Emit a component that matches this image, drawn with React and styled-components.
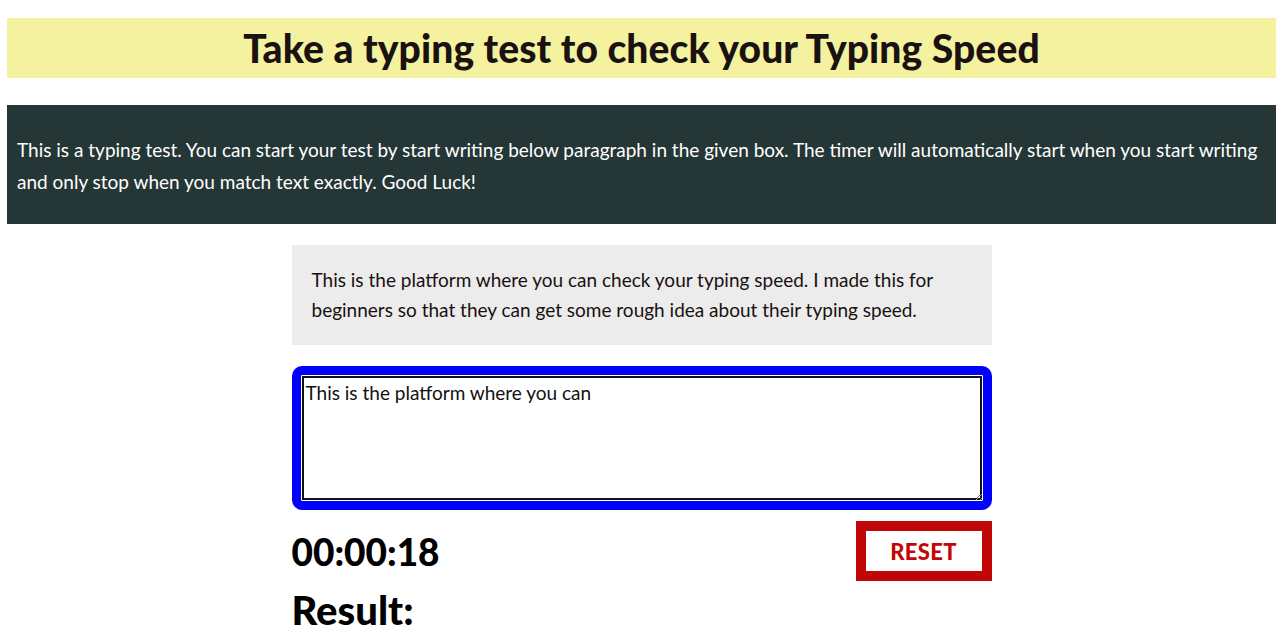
import React, { useState, useRef, useEffect } from "react";
import styled, { createGlobalStyle } from "styled-components";

const Global = createGlobalStyle`
  html, body { margin: 0; padding: 0; background: #fff; }
  body { font-family: Lato, "Open Sans", sans-serif; color: #111; }
  * { box-sizing: border-box; }
`;

const Page = styled.div`
  padding: 18px 12px 0 7px;
`;

const Header = styled.header`
  height: 60px;
  background: #f4f29e;
  display: flex;
  align-items: center;
  justify-content: center;
`;

const Title = styled.h1`
  margin: 0;
  font-size: 39px;
  font-weight: 900;
  color: #1a1212;
  letter-spacing: 0.1px;
`;

const Intro = styled.section`
  margin-top: 27px;
  background: #243636;
  color: #fff;
  padding: 29px 10px 26px;
  font-size: 19px;
  line-height: 32px;
`;

const Main = styled.main`
  width: 700px;
  margin: 21px auto 0;
  display: flex;
  flex-direction: column;
`;

const Sample = styled.div`
  background: #ececec;
  padding: 20px 20px;
  font-size: 19px;
  line-height: 30px;
  color: #1a1010;
`;

const Input = styled.textarea`
  margin-top: 21px;
  height: 144px;
  width: 100%;
  border: 9px solid #0000ff;
  border-radius: 10px;
  padding: 5px 5px;
  font-family: Lato, "Open Sans", sans-serif;
  font-size: 19px;
  line-height: 26px;
  color: #111;
  caret-color: #000;
  outline: none;
  box-shadow: inset 0 0 0 1px #fff, inset 0 0 0 3px #111;
  resize: vertical;
  display: block;
`;

const Row = styled.div`
  margin-top: 11px;
  display: flex;
  justify-content: space-between;
  align-items: center;
`;

const Timer = styled.div`
  font-size: 37px;
  font-weight: 900;
  color: #000;
`;

const Reset = styled.button`
  width: 136px;
  height: 60px;
  border: 10px solid #c00606;
  background: #fff;
  color: #c00606;
  font-family: Lato, "Open Sans", sans-serif;
  font-size: 22px;
  font-weight: 900;
  letter-spacing: 0.3px;
  cursor: pointer;
  padding: 0;
`;

const Result = styled.h2`
  margin: 5px 0 0;
  font-size: 40px;
  font-weight: 900;
  color: #000;
`;

export default function App() {
  const [text, setText] = useState("This is the platform where you can");
  const ref = useRef(null);
  useEffect(() => {
    const el = ref.current;
    if (el) {
      el.focus();
      el.setSelectionRange(el.value.length, el.value.length);
    }
  }, []);
  return (
    <>
      <Global />
      <Page>
        <Header>
          <Title>Take a typing test to check your Typing Speed</Title>
        </Header>
        <Intro>
          This is a typing test. You can start your test by start writing below paragraph in the given box. The timer will automatically start when you start writing and only stop when you match text exactly. Good Luck!
        </Intro>
        <Main>
          <Sample>
            This is the platform where you can check your typing speed. I made this for beginners so that they can get some rough idea about their typing speed.
          </Sample>
          <Input ref={ref} value={text} onChange={(e) => setText(e.target.value)} />
          <Row>
            <Timer>00:00:18</Timer>
            <Reset>RESET</Reset>
          </Row>
          <Result>Result:</Result>
        </Main>
      </Page>
    </>
  );
}
